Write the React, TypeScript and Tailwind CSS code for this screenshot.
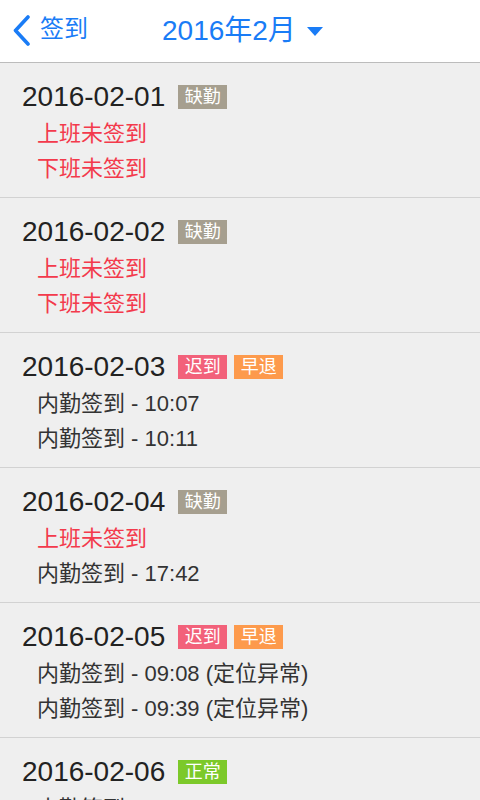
import React from "react";

type Tag = { label: string; color: string };
type Day = { date: string; tags: Tag[]; lines: { text: string; miss?: boolean }[] };

const absent = { label: "缺勤", color: "bg-[#a69f8f]" };
const late = { label: "迟到", color: "bg-[#f2617a]" };
const early = { label: "早退", color: "bg-[#fd9a4c]" };
const normal = { label: "正常", color: "bg-[#7cc92a]" };

const days: Day[] = [
  { date: "2016-02-01", tags: [absent], lines: [{ text: "上班未签到", miss: true }, { text: "下班未签到", miss: true }] },
  { date: "2016-02-02", tags: [absent], lines: [{ text: "上班未签到", miss: true }, { text: "下班未签到", miss: true }] },
  { date: "2016-02-03", tags: [late, early], lines: [{ text: "内勤签到 - 10:07" }, { text: "内勤签到 - 10:11" }] },
  { date: "2016-02-04", tags: [absent], lines: [{ text: "上班未签到", miss: true }, { text: "内勤签到 - 17:42" }] },
  { date: "2016-02-05", tags: [late, early], lines: [{ text: "内勤签到 - 09:08 (定位异常)" }, { text: "内勤签到 - 09:39 (定位异常)" }] },
  { date: "2016-02-06", tags: [normal], lines: [{ text: "内勤签到 - 09:01" }, { text: "内勤签到 - 18:05" }] },
];

function DayRow({ day }: { day: Day }) {
  return (
    <div className="border-b border-[#d2d2d2] pl-[22px] pt-[19px] pb-[11px]">
      <div className="flex items-center h-[30px]">
        <span className="text-[28px] text-[#222] leading-[30px]">{day.date}</span>
        <div className="flex gap-[7px] ml-[13px]">
          {day.tags.map((t) => (
            <span
              key={t.label}
              className={`${t.color} text-white text-[18px] leading-[24px] h-[24px] w-[49px] text-center`}
            >
              {t.label}
            </span>
          ))}
        </div>
      </div>
      <div className="pl-[15px] pt-[4px]">
        {day.lines.map((l, i) => (
          <div
            key={i}
            className={`text-[22px] leading-[35px] ${l.miss ? "text-[#f33a4c]" : "text-[#333]"}`}
          >
            {l.text}
          </div>
        ))}
      </div>
    </div>
  );
}

export default function App() {
  return (
    <div
      className="w-[480px] h-[800px] overflow-hidden bg-[#efefef]"
      style={{ fontFamily: '"Liberation Sans", "Noto Sans CJK SC", sans-serif' }}
    >
      <div className="h-[63px] bg-white border-b border-[#bcbcbc] flex items-center">
        <div className="flex items-center ml-[12px] text-[#1a7cf6]">
          <svg width="19" height="31" viewBox="0 0 19 31" className="mt-[-2px]">
            <path d="M16 2 L3.5 15.5 L16 29" fill="none" stroke="#1a7cf6" strokeWidth="3.6" strokeLinecap="round" strokeLinejoin="round" />
          </svg>
          <span className="ml-[9px] text-[24px] leading-none mt-[-4px]">签到</span>
        </div>
        <div className="flex items-center ml-[74px] text-[#1a7cf6]">
          <span className="text-[28px] leading-none">2016年2月</span>
          <svg width="16" height="9" viewBox="0 0 16 9" className="ml-[11px]">
            <path d="M0 0 H16 L8 9 Z" fill="#1a7cf6" />
          </svg>
        </div>
      </div>
      {days.map((d) => (
        <DayRow key={d.date} day={d} />
      ))}
    </div>
  );
}
